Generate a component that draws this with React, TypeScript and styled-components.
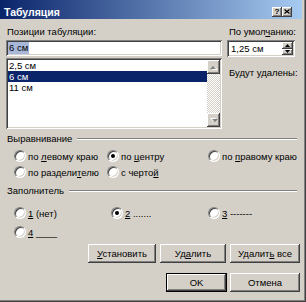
import styled, { createGlobalStyle, css } from 'styled-components';

const GlobalStyle = createGlobalStyle`
  html, body { margin: 0; padding: 0; background: #d4d0c8; }
  body {
    font-family: "Liberation Sans", Arial, sans-serif;
    font-size: 9.5px;
    color: #000;
  }
  #root { width: 306px; height: 302px; }
`;

const raised = css`
  box-shadow: inset -1px -1px #404040, inset 1px 1px #ffffff,
    inset -2px -2px #808080, inset 2px 2px #d4d0c8;
`;

const sunken = css`
  box-shadow: inset 1px 1px #808080, inset -1px -1px #ffffff,
    inset 2px 2px #404040, inset -2px -2px #d4d0c8;
`;

const Window = styled.div`
  box-sizing: border-box;
  width: 306px;
  height: 302px;
  padding: 0 4px 4px 0;
  background: #d4d0c8;
  box-shadow: inset -1px -1px #404040, inset -2px -2px #808080;
  display: flex;
  flex-direction: column;
`;

const TitleBar = styled.div`
  box-sizing: border-box;
  height: 19px;
  padding: 4px 10px 0 4px;
  display: flex;
  align-items: center;
  background: linear-gradient(to right, #0a246a, #a6caf0);
  color: #fff;
  font-weight: 700;
  font-size: 10.5px;
`;

const CaptionButtons = styled.div`
  margin-left: auto;
  display: flex;
`;

const CaptionButton = styled.div`
  box-sizing: border-box;
  width: 10px;
  height: 10px;
  background: #d4d0c8;
  ${raised};
  display: flex;
  align-items: center;
  justify-content: center;
  color: #000;
  font-size: 8px;
  font-weight: 700;
  line-height: 1;
`;

const Body = styled.div`
  padding: 7px 2px 0 6px;
  display: flex;
  flex-direction: column;
`;

const Top = styled.div`
  display: grid;
  grid-template-columns: 216px 68px;
  column-gap: 5px;
`;

const Column = styled.div`
  display: flex;
  flex-direction: column;
`;

const Label = styled.div<{ $mt?: number; $pl?: number }>`
  height: 12px;
  line-height: 12px;
  margin-top: ${(p) => p.$mt ?? 0}px;
  padding-left: ${(p) => p.$pl ?? 1}px;
  white-space: nowrap;
`;

const TextField = styled.div`
  box-sizing: border-box;
  margin-top: 2px;
  height: 16px;
  background: #fff;
  ${sunken};
  display: flex;
  align-items: center;
  padding-left: 2px;
`;

const Selected = styled.span`
  background: #a9b8d9;
  padding: 0 1px;
  line-height: 12px;
`;

const ListBox = styled.div`
  box-sizing: border-box;
  margin-top: 2px;
  height: 71px;
  padding: 2px;
  background: #fff;
  ${sunken};
  display: flex;
`;

const Rows = styled.div`
  flex: 1;
  display: flex;
  flex-direction: column;
`;

const Row = styled.div<{ $selected?: boolean }>`
  height: 11px;
  line-height: 11px;
  padding-left: 1px;
  background: ${(p) => (p.$selected ? '#0a246a' : 'transparent')};
  color: ${(p) => (p.$selected ? '#fff' : '#000')};
`;

const ScrollBar = styled.div`
  width: 13px;
  display: flex;
  flex-direction: column;
`;

const Track = styled.div`
  flex: 1;
  background: repeating-conic-gradient(#ffffff 0 25%, #d4d0c8 0 50%) 0 0 / 2px 2px;
`;

const ArrowButton = styled.div<{ $h: number }>`
  box-sizing: border-box;
  height: ${(p) => p.$h}px;
  background: #d4d0c8;
  ${raised};
  display: flex;
  align-items: center;
  justify-content: center;
`;

const Spinner = styled.div`
  box-sizing: border-box;
  margin-top: 2px;
  height: 17px;
  padding: 2px;
  background: #fff;
  ${sunken};
  display: flex;
`;

const SpinText = styled.div`
  flex: 1;
  display: flex;
  align-items: center;
  padding-left: 2px;
`;

const SpinButtons = styled.div`
  width: 11px;
  display: flex;
  flex-direction: column;
`;

const GroupHeader = styled.div<{ $mt: number }>`
  display: flex;
  align-items: center;
  height: 12px;
  margin-top: ${(p) => p.$mt}px;
  padding-left: 1px;
  white-space: nowrap;
  &::after {
    content: '';
    flex: 1;
    border-top: 1px solid #808080;
    border-bottom: 1px solid #ffffff;
    margin: 1px 3px 0 5px;
  }
`;

const RadioGrid = styled.div<{ $cols: string; $mt: number; $rowGap: number }>`
  display: grid;
  grid-template-columns: ${(p) => p.$cols};
  row-gap: ${(p) => p.$rowGap}px;
  margin-top: ${(p) => p.$mt}px;
  padding-left: 8px;
`;

const RadioItem = styled.div`
  display: flex;
  align-items: center;
  gap: 2px;
  height: 16px;
  white-space: nowrap;
`;

const RadioCircle = styled.span<{ $checked?: boolean }>`
  box-sizing: border-box;
  flex: none;
  width: 12px;
  height: 12px;
  border-radius: 50%;
  background: #fff;
  border: 1px solid;
  border-color: #808080 #ffffff #ffffff #808080;
  box-shadow: inset 1px 1px #404040, inset -1px -1px #d4d0c8;
  display: flex;
  align-items: center;
  justify-content: center;
  &::after {
    content: '';
    width: 4px;
    height: 4px;
    border-radius: 50%;
    background: #000;
    display: ${(p) => (p.$checked ? 'block' : 'none')};
  }
`;

const ButtonRow = styled.div<{ $mt: number; $gap: number }>`
  display: flex;
  justify-content: flex-end;
  gap: ${(p) => p.$gap}px;
  margin-top: ${(p) => p.$mt}px;
`;

const PushButton = styled.div<{ $w: number; $default?: boolean }>`
  box-sizing: border-box;
  width: ${(p) => p.$w}px;
  height: 19px;
  background: #d4d0c8;
  display: flex;
  align-items: center;
  justify-content: center;
  white-space: nowrap;
  ${(p) =>
    p.$default
      ? css`
          border: 1px solid #000;
          ${raised};
        `
      : raised};
`;

const Radio = ({ checked, children }: { checked?: boolean; children: React.ReactNode }) => (
  <RadioItem>
    <RadioCircle $checked={checked} />
    <span>{children}</span>
  </RadioItem>
);

const Button = ({ w, isDefault, children }: { w: number; isDefault?: boolean; children: React.ReactNode }) => (
  <PushButton $w={w} $default={isDefault}>
    <span>{children}</span>
  </PushButton>
);

const GreyArrow = ({ down }: { down?: boolean }) => (
  <svg width="8" height="5" viewBox="0 0 8 5">
    <g transform={down ? 'rotate(180 4 2.5)' : undefined}>
      <path d="M1 5 L7 5 L4 2 Z" fill="#ffffff" transform="translate(1 0)" />
      <path d="M0 4 L6 4 L3 1 Z" fill="#808080" />
    </g>
  </svg>
);

const BlackArrow = ({ down }: { down?: boolean }) => (
  <svg width="5" height="3" viewBox="0 0 5 3">
    <path d={down ? 'M0 0 L5 0 L2.5 3 Z' : 'M0 3 L5 3 L2.5 0 Z'} fill="#000" />
  </svg>
);

export default function App() {
  return (
    <>
      <GlobalStyle />
      <Window>
        <TitleBar>
          Табуляция
          <CaptionButtons>
            <CaptionButton>?</CaptionButton>
            <CaptionButton>
              <svg width="6" height="5" viewBox="0 0 6 5">
                <path d="M0.5 0.5 L5.5 4.5 M5.5 0.5 L0.5 4.5" stroke="#000" strokeWidth="1.3" />
              </svg>
            </CaptionButton>
          </CaptionButtons>
        </TitleBar>
        <Body>
          <Top>
            <Column>
              <Label>Позиции табуляции:</Label>
              <TextField>
                <Selected>6 см</Selected>
              </TextField>
              <ListBox>
                <Rows>
                  <Row>2,5 см</Row>
                  <Row $selected>6 см</Row>
                  <Row>11 см</Row>
                </Rows>
                <ScrollBar>
                  <ArrowButton $h={14}>
                    <GreyArrow />
                  </ArrowButton>
                  <Track />
                  <ArrowButton $h={14}>
                    <GreyArrow down />
                  </ArrowButton>
                </ScrollBar>
              </ListBox>
            </Column>
            <Column>
              <Label $pl={2}>
                По умол<u>ч</u>анию:
              </Label>
              <Spinner>
                <SpinText>1,25 см</SpinText>
                <SpinButtons>
                  <ArrowButton $h={6.5}>
                    <BlackArrow />
                  </ArrowButton>
                  <ArrowButton $h={6.5}>
                    <BlackArrow down />
                  </ArrowButton>
                </SpinButtons>
              </Spinner>
              <Label $mt={10} $pl={2}>
                Будут удалены:
              </Label>
            </Column>
          </Top>

          <GroupHeader $mt={3}>Выравнивание</GroupHeader>
          <RadioGrid $cols="93px 101px auto" $mt={4} $rowGap={0}>
            <Radio>
              по <u>л</u>евому краю
            </Radio>
            <Radio checked>
              по <u>ц</u>ентру
            </Radio>
            <Radio>
              по <u>п</u>равому краю
            </Radio>
            <Radio>
              по раздели<u>т</u>елю
            </Radio>
            <Radio>
              с черто<u>й</u>
            </Radio>
          </RadioGrid>

          <GroupHeader $mt={4}>Заполнитель</GroupHeader>
          <RadioGrid $cols="97px 97px auto" $mt={9} $rowGap={3}>
            <Radio>
              <u>1</u> (нет)
            </Radio>
            <Radio checked>
              <u>2</u> .......
            </Radio>
            <Radio>
              <u>3</u> -------
            </Radio>
            <Radio>
              <u>4</u> ____
            </Radio>
          </RadioGrid>

          <ButtonRow $mt={4} $gap={4}>
            <Button w={68}>
              <u>У</u>становить
            </Button>
            <Button w={66}>
              Уд<u>а</u>лить
            </Button>
            <Button w={70}>
              Удалит<u>ь</u> все
            </Button>
          </ButtonRow>
          <ButtonRow $mt={10} $gap={3}>
            <Button w={61} isDefault>
              OK
            </Button>
            <Button w={70}>Отмена</Button>
          </ButtonRow>
        </Body>
      </Window>
    </>
  );
}
